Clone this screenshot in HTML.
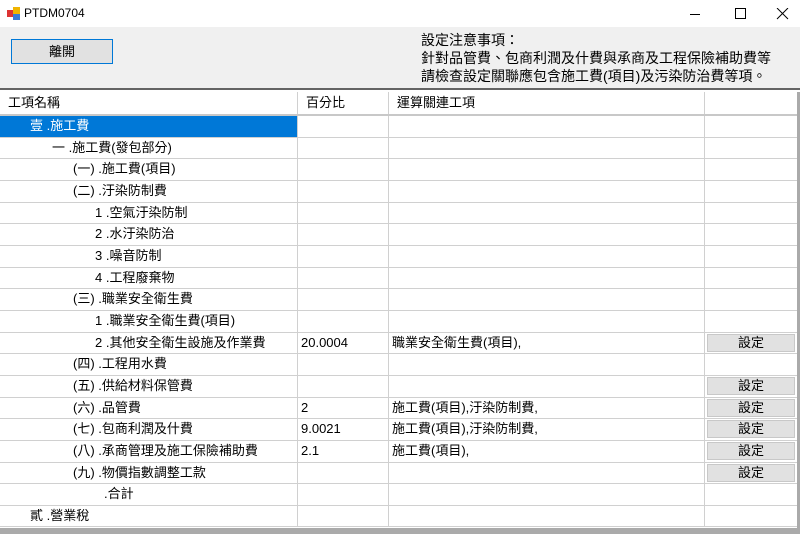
<!DOCTYPE html>
<html><head><meta charset="utf-8"><style>
*{margin:0;padding:0;box-sizing:border-box}
body{width:800px;height:534px;overflow:hidden;background:#fff;font-family:"Liberation Sans","Noto Sans CJK TC",sans-serif;font-size:13px;color:#000;position:relative}
.title{position:absolute;left:0;top:0;width:800px;height:27px;background:#fff}
.title .t{position:absolute;left:24px;top:6px;font-size:12px}
.tool{position:absolute;left:0;top:27px;width:800px;height:63px;background:#f0f0f0;border-bottom:2px solid #646464}
.btn{position:absolute;left:11px;top:12px;width:102px;height:25px;border:1px solid #0078d7;background:#e1e1e1;text-align:center;line-height:23px;font-size:13px}
.note{position:absolute;left:421px;top:4px;line-height:18px;font-size:14px;white-space:nowrap}
.grid{position:absolute;left:0;top:92px;width:797px;height:436px;background:#fff}
.gray{position:absolute;left:797px;top:92px;width:3px;height:442px;background:#aaa}
.bot{position:absolute;left:0;top:528px;width:800px;height:6px;background:#aaa}
.row{display:flex;height:21.67px;border-bottom:1px solid #d0d0d0}
.hdr{height:24px;border-bottom:2px solid #c8c8c8}
.c{border-right:1px solid #d0d0d0;white-space:nowrap;overflow:hidden;line-height:20px;padding-left:3px}
.c1{width:298px}.c2{width:91px}.c3{width:316px}.c4{width:92px;border-right:none;padding:1px 2px 0 2px}
.hdr .c{line-height:22px;padding-left:8px}
.sel{background:#0078d7;color:#fff}
.s{display:block;height:18px;background:#e1e1e1;border:1px solid #c8c8c8;text-align:center;line-height:16px}
</style></head><body>
<div class="title">
<svg style="position:absolute;left:7px;top:7px" width="13" height="13"><rect x="0" y="3" width="6" height="7" fill="#d33"/><rect x="6" y="0" width="7" height="7" fill="#f0b400"/><rect x="6" y="7" width="7" height="6" fill="#3a7bd5"/></svg>
<span class="t">PTDM0704</span>
<svg style="position:absolute;left:690px;top:8px" width="100" height="12"><line x1="0" y1="6.5" x2="10" y2="6.5" stroke="#000"/><rect x="45.5" y="0.5" width="10" height="10" fill="none" stroke="#000"/><path d="M87 0L98 11M98 0L87 11" stroke="#000"/></svg>
</div>
<div class="tool">
<div class="btn">離開</div>
<div class="note">設定注意事項：<br>針對品管費、包商利潤及什費與承商及工程保險補助費等<br>請檢查設定關聯應包含施工費(項目)及污染防治費等項。</div>
</div>
<div class="grid">
<div class="row hdr"><div class="c c1">工項名稱</div><div class="c c2">百分比</div><div class="c c3">運算關連工項</div><div class="c c4"></div></div>
<div class="row"><div class="c c1 sel" style="padding-left:30px">壹 .施工費</div><div class="c c2"></div><div class="c c3"></div><div class="c c4"></div></div>
<div class="row"><div class="c c1" style="padding-left:52px">一 .施工費(發包部分)</div><div class="c c2"></div><div class="c c3"></div><div class="c c4"></div></div>
<div class="row"><div class="c c1" style="padding-left:73px">(一) .施工費(項目)</div><div class="c c2"></div><div class="c c3"></div><div class="c c4"></div></div>
<div class="row"><div class="c c1" style="padding-left:73px">(二) .汙染防制費</div><div class="c c2"></div><div class="c c3"></div><div class="c c4"></div></div>
<div class="row"><div class="c c1" style="padding-left:95px">1 .空氣汙染防制</div><div class="c c2"></div><div class="c c3"></div><div class="c c4"></div></div>
<div class="row"><div class="c c1" style="padding-left:95px">2 .水汙染防治</div><div class="c c2"></div><div class="c c3"></div><div class="c c4"></div></div>
<div class="row"><div class="c c1" style="padding-left:95px">3 .噪音防制</div><div class="c c2"></div><div class="c c3"></div><div class="c c4"></div></div>
<div class="row"><div class="c c1" style="padding-left:95px">4 .工程廢棄物</div><div class="c c2"></div><div class="c c3"></div><div class="c c4"></div></div>
<div class="row"><div class="c c1" style="padding-left:73px">(三) .職業安全衛生費</div><div class="c c2"></div><div class="c c3"></div><div class="c c4"></div></div>
<div class="row"><div class="c c1" style="padding-left:95px">1 .職業安全衛生費(項目)</div><div class="c c2"></div><div class="c c3"></div><div class="c c4"></div></div>
<div class="row"><div class="c c1" style="padding-left:95px">2 .其他安全衛生設施及作業費</div><div class="c c2">20.0004</div><div class="c c3">職業安全衛生費(項目),</div><div class="c c4"><span class="s">設定</span></div></div>
<div class="row"><div class="c c1" style="padding-left:73px">(四) .工程用水費</div><div class="c c2"></div><div class="c c3"></div><div class="c c4"></div></div>
<div class="row"><div class="c c1" style="padding-left:73px">(五) .供給材料保管費</div><div class="c c2"></div><div class="c c3"></div><div class="c c4"><span class="s">設定</span></div></div>
<div class="row"><div class="c c1" style="padding-left:73px">(六) .品管費</div><div class="c c2">2</div><div class="c c3">施工費(項目),汙染防制費,</div><div class="c c4"><span class="s">設定</span></div></div>
<div class="row"><div class="c c1" style="padding-left:73px">(七) .包商利潤及什費</div><div class="c c2">9.0021</div><div class="c c3">施工費(項目),汙染防制費,</div><div class="c c4"><span class="s">設定</span></div></div>
<div class="row"><div class="c c1" style="padding-left:73px">(八) .承商管理及施工保險補助費</div><div class="c c2">2.1</div><div class="c c3">施工費(項目),</div><div class="c c4"><span class="s">設定</span></div></div>
<div class="row"><div class="c c1" style="padding-left:73px">(九) .物價指數調整工款</div><div class="c c2"></div><div class="c c3"></div><div class="c c4"><span class="s">設定</span></div></div>
<div class="row"><div class="c c1" style="padding-left:104px">.合計</div><div class="c c2"></div><div class="c c3"></div><div class="c c4"></div></div>
<div class="row"><div class="c c1" style="padding-left:30px">貳 .營業稅</div><div class="c c2"></div><div class="c c3"></div><div class="c c4"></div></div>
</div>
<div class="gray"></div>
<div class="bot"></div>
</body></html>
